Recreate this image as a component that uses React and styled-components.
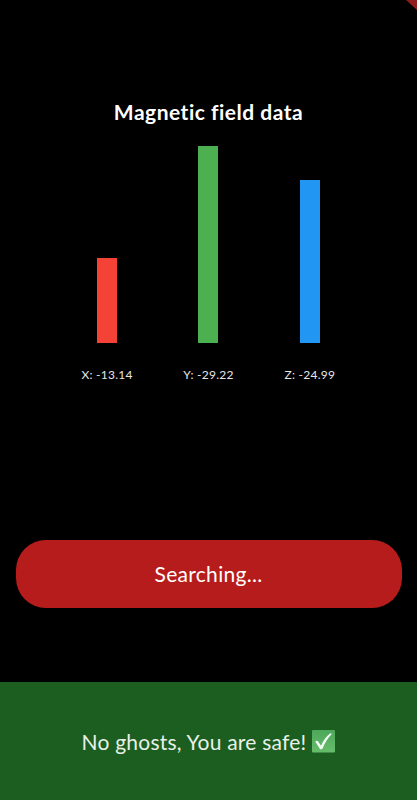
import styled, { createGlobalStyle } from "styled-components";

const GlobalStyle = createGlobalStyle`
  * {
    box-sizing: border-box;
  }
  body {
    margin: 0;
    background: #000;
    font-family: Lato, "Noto Sans", sans-serif;
  }
`;

const Screen = styled.main`
  position: relative;
  display: flex;
  flex-direction: column;
  height: 800px;
  background: #000;
  color: #fff;
  overflow: hidden;
`;

const Ribbon = styled.div`
  position: absolute;
  top: 0;
  right: 0;
  width: 11px;
  height: 10px;
  background: #8f1b1d;
  clip-path: polygon(0 0, 100% 0, 100% 100%);
`;

const Title = styled.h1`
  margin: 97px 0 0;
  font-size: 21px;
  font-weight: 700;
  line-height: 30px;
  letter-spacing: 0.5px;
  text-align: center;
`;

const Chart = styled.section`
  display: grid;
  grid-template-columns: repeat(3, 101.4px);
  justify-content: center;
  margin-top: 18px;
  height: 241px;
`;

const Axis = styled.div`
  display: flex;
  flex-direction: column;
  align-items: center;
`;

const BarArea = styled.div`
  display: flex;
  align-items: flex-end;
  height: 198px;
`;

const Bar = styled.div`
  width: 20px;
  background: ${({ $color }) => $color};
`;

const Reading = styled.span`
  margin-top: 23px;
  color: #e6e6e6;
  font-size: 12px;
  line-height: 18px;
  letter-spacing: 0.25px;
  white-space: nowrap;
`;

const SearchButton = styled.button`
  height: 67.5px;
  margin: 154px 15.5px 0;
  padding: 0;
  border: 0;
  border-radius: 30px;
  background: #b71c1c;
  color: #fff;
  font-family: inherit;
  font-size: 21px;
  letter-spacing: 0.3px;
`;

const Status = styled.footer`
  display: flex;
  align-items: center;
  justify-content: center;
  gap: 6px;
  height: 118px;
  margin-top: auto;
  background: #1b5e20;
  color: #e8f0e8;
  font-size: 21px;
  letter-spacing: 0.22px;
`;

const axes = [
  { name: "X", value: -13.14, height: 85, color: "#f44336" },
  { name: "Y", value: -29.22, height: 197.5, color: "#4caf50" },
  { name: "Z", value: -24.99, height: 163, color: "#2196f3" },
];

const CheckMark = () => (
  <svg width="23" height="23" viewBox="0 0 23 23">
    <defs>
      <linearGradient id="check" x1="0" y1="0" x2="0" y2="1">
        <stop offset="0" stopColor="#4da75a" />
        <stop offset="1" stopColor="#66bd6c" />
      </linearGradient>
    </defs>
    <rect width="23" height="22.5" rx="1" fill="url(#check)" />
    <path
      d="M3.3 11.7Q5 9.8 6.2 11.4L9 15.7Q12.8 7.5 17.8 3.8Q19.4 2.7 19.8 4.1Q14.4 9.5 10.5 18.5Q9 20.2 7.7 18.5Z"
      fill="#f3faf3"
    />
  </svg>
);

export default function App() {
  return (
    <Screen>
      <GlobalStyle />
      <Ribbon />
      <Title>Magnetic field data</Title>
      <Chart>
        {axes.map(({ name, value, height, color }) => (
          <Axis key={name}>
            <BarArea>
              <Bar $color={color} style={{ height }} />
            </BarArea>
            <Reading>
              {name}: {value}
            </Reading>
          </Axis>
        ))}
      </Chart>
      <SearchButton>Searching...</SearchButton>
      <Status>
        <span>No ghosts, You are safe!</span>
        <CheckMark />
      </Status>
    </Screen>
  );
}
